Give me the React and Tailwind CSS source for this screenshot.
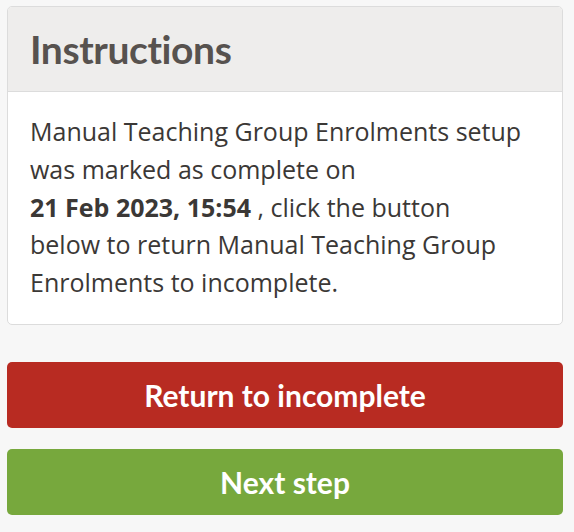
import React from 'react';

const App = () => {
  return (
    <div className="min-h-[532px] bg-[#f7f7f7] pl-[7px] pr-[11px] pt-[6px] font-['Lato','Noto_Sans',sans-serif]">
      <div className="rounded-[5px] border border-[#dcdcdc] bg-white overflow-hidden">
        <div className="bg-[#eeedec] border-b border-[#dcdcdc] px-[22px] h-[85px] flex items-center">
          <h2 className="text-[39px] leading-none font-bold tracking-[-0.4px] text-[#57524f]">Instructions</h2>
        </div>
        <div className="px-[22px] pt-[21px] pb-[22px] font-['Open_Sans','Lato',sans-serif] text-[25px] leading-[37.75px] text-[#3b3836]">
          Manual Teaching Group Enrolments setup
          <br />
          was marked as complete on
          <br />
          <strong className="font-bold">21 Feb 2023, 15:54</strong> , click the button
          <br />
          below to return Manual Teaching Group
          <br />
          Enrolments to incomplete.
        </div>
      </div>

      <div className="mt-[37px] flex flex-col gap-[21px]">
        <button className="h-[66px] rounded-[5px] bg-[#b82b22] text-white text-[30px] leading-none font-bold">
          Return to incomplete
        </button>
        <button className="h-[66px] rounded-[5px] bg-[#77a83d] text-white text-[30px] leading-none font-bold">
          Next step
        </button>
      </div>
    </div>
  );
};

export default App;
